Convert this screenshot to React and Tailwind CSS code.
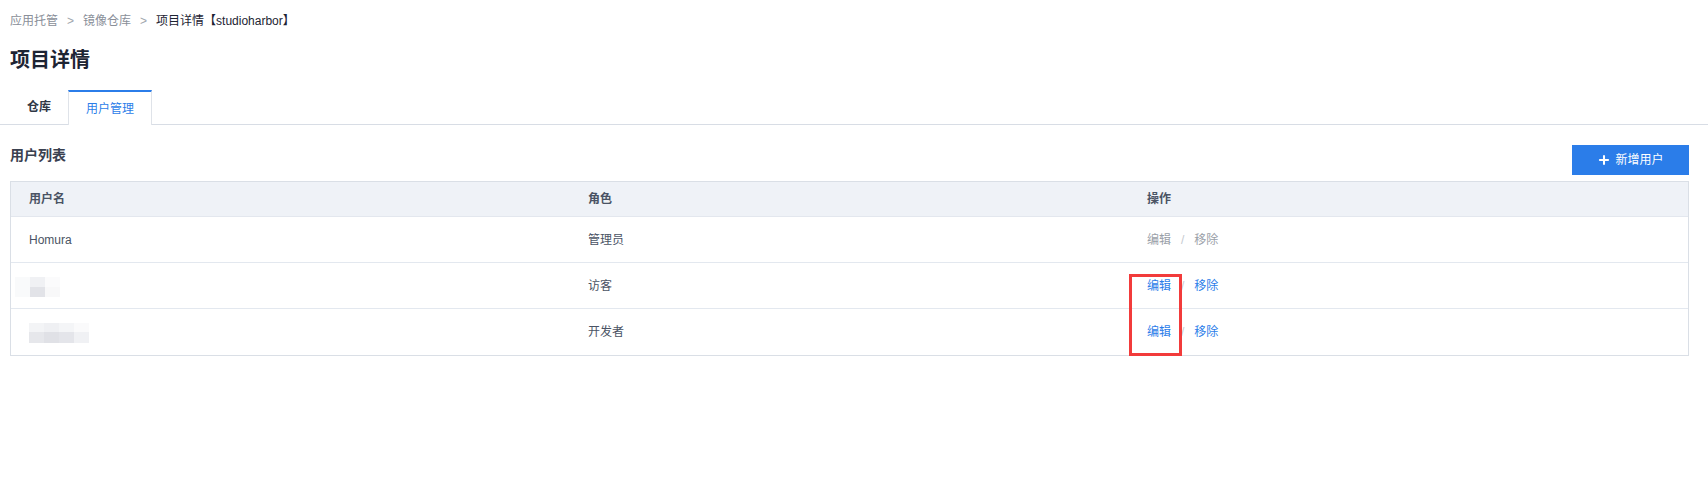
import { Plus } from "lucide-react"

const users = [
  { id: 1, name: "Homura", role: "管理员", disabled: true },
  { id: 2, name: null, role: "访客", blur: "short", marked: true },
  { id: 3, name: null, role: "开发者", blur: "long", marked: true },
]

const BlurShort = () => (
  <div className="flex flex-col">
    <div className="flex">
      <div className="w-[15px] h-[10px] bg-[#f9fafb]" />
      <div className="w-[15px] h-[10px] bg-[#f0f1f4]" />
      <div className="w-[15px] h-[10px] bg-[#fbfbfc]" />
    </div>
    <div className="flex">
      <div className="w-[15px] h-[10px] bg-[#f9fafb]" />
      <div className="w-[15px] h-[10px] bg-[#e2e3e8]" />
      <div className="w-[15px] h-[10px] bg-[#f8f8f9]" />
    </div>
  </div>
)

const BlurLong = () => (
  <div className="flex flex-col">
    <div className="flex">
      <div className="w-[15px] h-[9px] bg-[#f3f4f6]" />
      <div className="w-[15px] h-[9px] bg-[#eff0f3]" />
      <div className="w-[15px] h-[9px] bg-[#f4f5f7]" />
      <div className="w-[15px] h-[9px] bg-[#fafafb]" />
    </div>
    <div className="flex">
      <div className="w-[15px] h-[11px] bg-[#e6e7eb]" />
      <div className="w-[15px] h-[11px] bg-[#e0e1e6]" />
      <div className="w-[15px] h-[11px] bg-[#e4e5ea]" />
      <div className="w-[15px] h-[11px] bg-[#f0f1f4]" />
    </div>
  </div>
)

const App = () => {
  return (
    <div
      className="min-h-screen bg-white pl-[10px] pr-[19px] pt-[11px] text-[#555e6d]"
      style={{ fontFamily: '"Liberation Sans", "Noto Sans CJK SC", sans-serif' }}
    >
      {/* breadcrumb */}
      <div className="flex items-center h-5 text-xs leading-5">
        <span className="text-[#8a8f99]">应用托管</span>
        <span className="text-[#a0a5ad] mx-[9px]">&gt;</span>
        <span className="text-[#8a8f99]">镜像仓库</span>
        <span className="text-[#a0a5ad] mx-[9px]">&gt;</span>
        <span className="text-[#1d2433]">项目详情【studioharbor】</span>
      </div>

      <h1 className="mt-[15px] text-[20px] leading-7 font-bold text-[#1d2433]">项目详情</h1>

      {/* tabs */}
      <div className="mt-4 -mr-[19px] -ml-[10px] pl-[10px] flex border-b border-[#d8dde5] h-[35px]">
        <div className="px-[17px] h-[34px] flex items-center text-xs font-bold text-[#2f3746]">仓库</div>
        <div className="px-[17px] h-[35px] -mb-px flex items-center text-xs text-[#2b7de9] bg-white border-t-2 border-t-[#2b7de9] border-x border-x-[#dfe3e9]">
          用户管理
        </div>
      </div>

      {/* section header */}
      <div className="mt-5 flex items-start justify-between">
        <div className="text-sm leading-5 font-bold text-[#3a4150]">用户列表</div>
        <button className="w-[117px] h-[30px] bg-[#2b7de9] text-white text-xs flex items-center justify-center gap-1">
          <Plus size={14} strokeWidth={3.5} />
          新增用户
        </button>
      </div>

      {/* table */}
      <div className="relative mt-[6px] border border-[#dadfe6]">
        <div className="grid grid-cols-3 h-[35px] bg-[#eff2f7] border-b border-[#e3e7ee] text-xs font-bold text-[#4a5364]">
          <div className="pl-[18px] flex items-center">用户名</div>
          <div className="pl-[18px] flex items-center">角色</div>
          <div className="pl-[18px] flex items-center">操作</div>
        </div>
        {users.map((user, i) => (
          <div
            key={user.id}
            className={`grid grid-cols-3 h-[46px] text-xs ${i < users.length - 1 ? "border-b border-[#e3e8ef]" : ""}`}
          >
            <div className="pl-[18px] flex items-center">
              {user.name ? (
                <span className="text-[#4a5364]">{user.name}</span>
              ) : user.blur === "short" ? (
                <div className="-ml-[14px] mt-[2px]">
                  <BlurShort />
                </div>
              ) : (
                <div className="mt-[2px]">
                  <BlurLong />
                </div>
              )}
            </div>
            <div className="pl-[18px] flex items-center text-[#4a5364]">{user.role}</div>
            <div className="pl-[18px] flex items-center">
              <span className={user.disabled ? "text-[#9aa0a8]" : "text-[#2b7de9]"}>编辑</span>
              <span className="text-[#c5c9cf] mx-[10px]">/</span>
              <span className={user.disabled ? "text-[#9aa0a8]" : "text-[#2b7de9]"}>移除</span>
            </div>
          </div>
        ))}
        {/* annotation */}
        <div className="absolute left-[1118px] top-[92px] w-[53px] h-[82px] border-[3px] border-[#f23b3b]" />
      </div>
    </div>
  )
}

export default App
